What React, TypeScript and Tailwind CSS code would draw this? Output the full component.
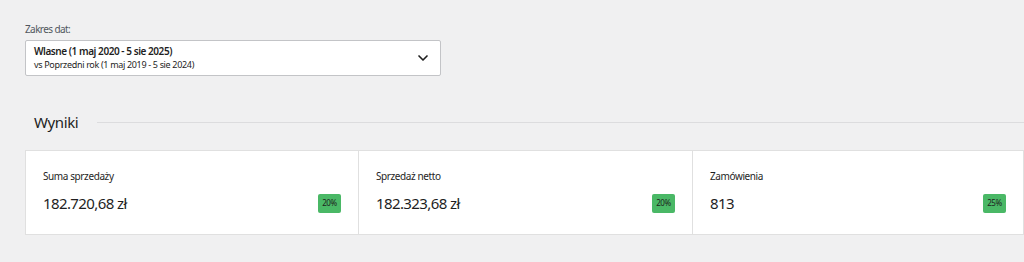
import { ChevronDown } from "lucide-react";

const stats = [
  { label: "Suma sprzedaży", value: "182.720,68 zł", delta: "20%" },
  { label: "Sprzedaż netto", value: "182.323,68 zł", delta: "20%" },
  { label: "Zamówienia", value: "813", delta: "25%" },
];

export default function App() {
  return (
    <div
      className="h-[262px] w-[1024px] overflow-hidden bg-[#f0f0f1] text-[#1e1e1e]"
      style={{ fontFamily: '"Noto Sans", "Open Sans", sans-serif' }}
    >
      <div className="pl-[25px] pt-[22px]">
        <p className="text-[10px] leading-[14px] tracking-[-0.6px] text-[#50575e]">Zakres dat:</p>
        <button
          type="button"
          className="mt-[4px] flex h-[36px] w-[416px] items-center justify-between rounded-[2px] border border-[#c3c4c7] bg-white pl-[8px] pr-[9px] text-left"
        >
          <div className="flex flex-col">
            <span className="text-[10px] font-semibold leading-[13px] tracking-[-0.45px] text-[#1e1e1e]">
              Wlasne (1 maj 2020 - 5 sie 2025)
            </span>
            <span className="text-[9px] leading-[13px] tracking-[-0.33px] text-[#1e1e1e]">
              vs Poprzedni rok (1 maj 2019 - 5 sie 2024)
            </span>
          </div>
          <ChevronDown className="h-[16px] w-[16px] text-[#1e1e1e]" strokeWidth={2.5} />
        </button>
      </div>

      <div className="mt-[35px] flex items-center pl-[34px]">
        <h2 className="text-[15px] leading-[22px] tracking-[-0.4px] text-[#1e1e1e]">Wyniki</h2>
        <div className="ml-[19px] h-px flex-1 bg-[#dcdcde]" />
      </div>

      <div className="ml-[25px] mt-[17px] grid h-[85px] grid-cols-[332px_334px_1fr] border border-[#e0e0e0] bg-white">
        {stats.map((s, i) => (
          <div
            key={s.label}
            className={`flex flex-col pl-[17px] pr-[17px] pt-[18px] ${i > 0 ? "border-l border-[#e0e0e0]" : ""}`}
          >
            <span className="text-[10px] leading-[14px] tracking-[-0.4px] text-[#1e1e1e]">{s.label}</span>
            <div className="mt-[9px] flex items-center justify-between">
              <span className="text-[15px] leading-[22px] tracking-[-0.6px] text-[#1e1e1e]">{s.value}</span>
              <span className="flex h-[19px] w-[23px] items-center justify-center rounded-[2px] bg-[#4ab866] text-[8px] tracking-[-0.4px] text-[#1e1e1e]">
                {s.delta}
              </span>
            </div>
          </div>
        ))}
      </div>
    </div>
  );
}
